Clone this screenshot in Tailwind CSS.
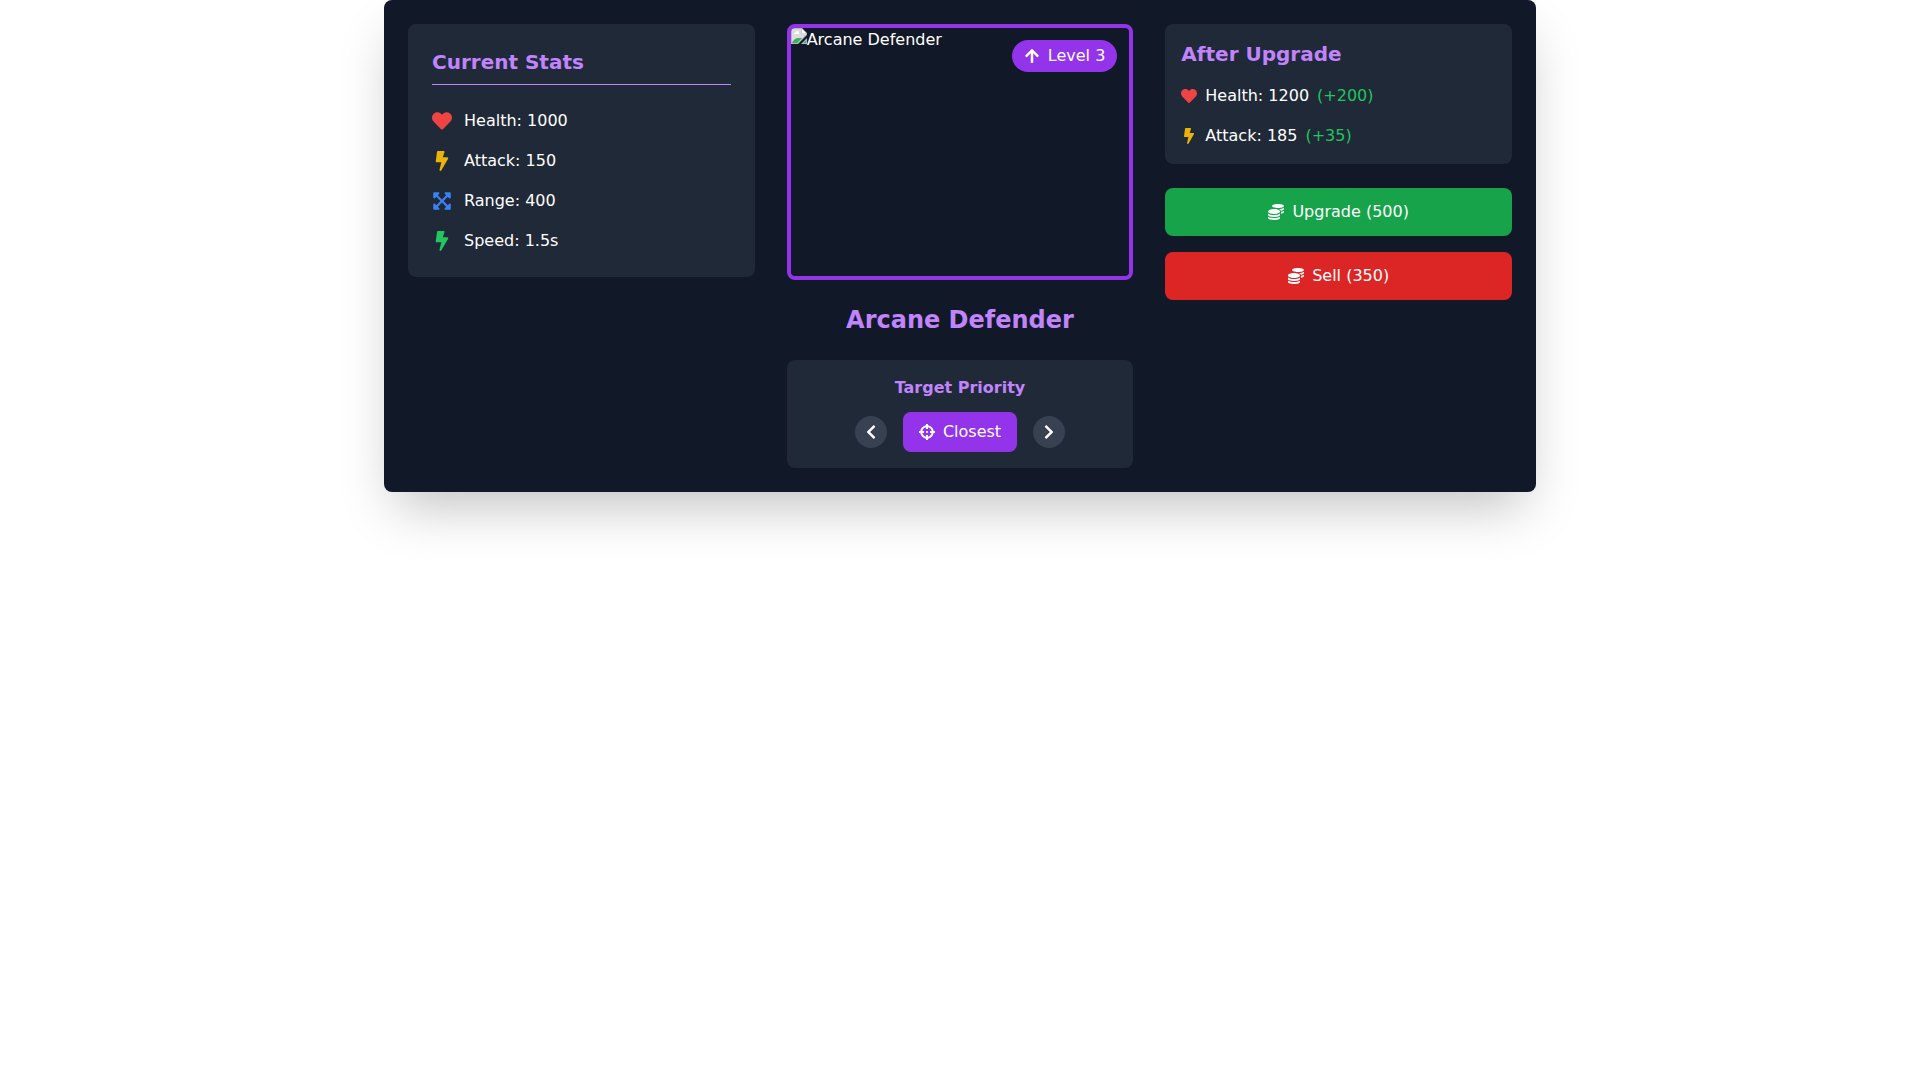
<!DOCTYPE html>
<html lang="en">
<head>
    <meta charset="UTF-8" />
    <meta name="viewport" content="width=device-width, initial-scale=1.0" />
    <title>Arcane Defender</title>
    <script src="https://cdn.jsdelivr.net/npm/@tailwindcss/browser@4"></script>
</head>
<body class="min-h-screen bg-white font-['DejaVu_Sans',sans-serif]">
<!-- Icon sprite -->
<svg class="hidden" aria-hidden="true">
    <symbol id="heart" viewBox="0 0 512 512"><path d="M462.3 62.6C407.5 15.9 326 24.3 275.7 76.2L256 96.5l-19.7-20.3C186.1 24.3 104.5 15.9 49.7 62.6c-62.8 53.6-66.1 149.8-9.9 207.9l193.5 199.8c12.5 12.9 32.8 12.9 45.3 0l193.5-199.8c56.3-58.1 53-154.3-9.8-207.9z"/></symbol>
    <symbol id="bolt" viewBox="0 0 320 512"><path d="M296 160H180.6l42.6-129.8C227.2 15 215.7 0 200 0H56C44 0 33.8 8.9 32.2 20.8l-32 240C-1.7 275.2 9.5 288 24 288h118.7L96.6 482.5c-3.6 15.2 8 29.5 23.3 29.5 8.4 0 16.4-4.4 20.8-12l176-304c9.3-15.9-2.2-36-20.7-36z"/></symbol>
    <symbol id="expand" viewBox="0 0 448 512"><path d="M448 344v112a23.94 23.94 0 0 1-24 24H312c-21.39 0-32.09-25.9-17-41l36.2-36.2L224 295.6 116.77 402.9 153 439c15.09 15.1 4.39 41-17 41H24a23.94 23.94 0 0 1-24-24V344c0-21.4 25.89-32.1 41-17l36.19 36.2L184.46 256 77.18 148.7 41 185c-15.1 15.1-41 4.4-41-17V56a23.94 23.94 0 0 1 24-24h112c21.39 0 32.09 25.9 17 41l-36.2 36.2L224 216.4l107.23-107.3L295 73c-15.09-15.1-4.39-41 17-41h112a23.94 23.94 0 0 1 24 24v112c0 21.4-25.89 32.1-41 17l-36.19-36.2L263.54 256l107.28 107.3L407 327.1c15.1-15.2 41-4.5 41 16.9z"/></symbol>
    <symbol id="arrow-up" viewBox="0 0 448 512"><path d="M34.9 289.5l-22.2-22.2c-9.4-9.4-9.4-24.6 0-33.9L207 39c9.4-9.4 24.6-9.4 33.9 0l194.3 194.3c9.4 9.4 9.4 24.6 0 33.9L413 289.4c-9.5 9.5-25 9.3-34.3-.4L264 168.6V456c0 13.3-10.7 24-24 24h-32c-13.3 0-24-10.7-24-24V168.6L69.2 289.1c-9.3 9.8-24.8 10-34.3.4z"/></symbol>
    <symbol id="chevron-left" viewBox="0 0 320 512"><path d="M34.52 239.03L228.87 44.69c9.37-9.37 24.57-9.37 33.94 0l22.67 22.67c9.36 9.36 9.37 24.52.04 33.9L131.49 256l154.02 154.75c9.34 9.38 9.32 24.54-.04 33.9l-22.67 22.67c-9.37 9.37-24.57 9.37-33.94 0L34.52 272.97c-9.37-9.37-9.37-24.57 0-33.94z"/></symbol>
    <symbol id="chevron-right" viewBox="0 0 320 512"><path d="M285.476 272.971L91.132 467.314c-9.373 9.373-24.569 9.373-33.941 0l-22.667-22.667c-9.357-9.357-9.375-24.522-.04-33.901L188.505 256 34.484 101.255c-9.335-9.379-9.317-24.544.04-33.901l22.667-22.667c9.373-9.373 24.569-9.373 33.941 0L285.475 239.03c9.373 9.372 9.373 24.568.001 33.941z"/></symbol>
    <symbol id="crosshairs" viewBox="0 0 512 512"><path d="M500 224h-30.364C455.724 130.325 381.675 56.276 288 42.364V12c0-6.627-5.373-12-12-12h-40c-6.627 0-12 5.373-12 12v30.364C130.325 56.276 56.276 130.325 42.364 224H12c-6.627 0-12 5.373-12 12v40c0 6.627 5.373 12 12 12h30.364C56.276 381.675 130.325 455.724 224 469.636V500c0 6.627 5.373 12 12 12h40c6.627 0 12-5.373 12-12v-30.364C381.675 455.724 455.724 381.675 469.636 288H500c6.627 0 12-5.373 12-12v-40c0-6.627-5.373-12-12-12zM288 404.634V364c0-6.627-5.373-12-12-12h-40c-6.627 0-12 5.373-12 12v40.634C165.826 392.232 119.783 346.243 107.366 288H148c6.627 0 12-5.373 12-12v-40c0-6.627-5.373-12-12-12h-40.634C119.768 165.826 165.757 119.783 224 107.366V148c0 6.627 5.373 12 12 12h40c6.627 0 12-5.373 12-12v-40.634C346.174 119.768 392.217 165.757 404.634 224H364c-6.627 0-12 5.373-12 12v40c0 6.627 5.373 12 12 12h40.634C392.232 346.174 346.243 392.217 288 404.634zM288 256c0 17.673-14.327 32-32 32s-32-14.327-32-32c0-17.673 14.327-32 32-32s32 14.327 32 32z"/></symbol>
    <symbol id="coins" viewBox="0 0 512 512"><path d="M0 405.3V448c0 35.3 86 64 192 64s192-28.7 192-64v-42.7C342.7 434.4 267.2 448 192 448S41.3 434.4 0 405.3zM320 128c106 0 192-28.7 192-64S426 0 320 0 128 28.7 128 64s86 64 192 64zM0 300.4V352c0 35.3 86 64 192 64s192-28.7 192-64v-51.6c-41.3 34-116.9 51.6-192 51.6S41.3 334.4 0 300.4zm416 11c57.3-11.1 96-31.7 96-55.4v-42.7c-23.2 16.4-57.3 27.6-96 34.5v63.6zM192 160C86 160 0 195.8 0 240s86 80 192 80 192-35.8 192-80-86-80-192-80zm219.3 56.3c60-10.8 100.7-32 100.7-56.3v-42.7c-35.5 25.1-96.5 38.6-160.7 41.8 29.5 14.3 51.2 33.5 60 57.2z"/></symbol>
</svg>
<main class="w-full max-w-6xl mx-auto p-6 rounded-lg bg-[#111827] text-white shadow-2xl">
    <div class="grid grid-cols-1 md:grid-cols-3 gap-8 items-start">
        <!-- Current stats -->
        <section class="bg-[#1f2937] rounded-lg p-6">
            <h2 class="text-xl font-bold text-[#c084fc] border-b border-[#c084fc] pb-2 mb-6">Current Stats</h2>
            <ul class="space-y-4">
                <li class="flex items-center gap-3">
                    <svg class="size-5 fill-[#ef4444]"><use href="#heart"/></svg>
                    <span>Health: 1000</span>
                </li>
                <li class="flex items-center gap-3">
                    <svg class="size-5 fill-[#eab308]"><use href="#bolt"/></svg>
                    <span>Attack: 150</span>
                </li>
                <li class="flex items-center gap-3">
                    <svg class="size-5 fill-[#3b82f6]"><use href="#expand"/></svg>
                    <span>Range: 400</span>
                </li>
                <li class="flex items-center gap-3">
                    <svg class="size-5 fill-[#22c55e]"><use href="#bolt"/></svg>
                    <span>Speed: 1.5s</span>
                </li>
            </ul>
        </section>

        <!-- Tower -->
        <section class="text-center">
            <div class="relative h-64 rounded-lg border-4 border-[#9333ea] overflow-hidden">
                <div class="flex items-start text-left">
                    <svg class="size-4 shrink-0" viewBox="0 0 16 16">
                        <path fill="#b8b8b8" d="M0 0h11l5 5v2L7 16H0z"/>
                        <path fill="#dcdcdc" d="M1 1h9.500v5H15v.6L6.600 15H1z"/>
                        <path fill="#fff" d="M11 1v4.500h4.500zM3 6a1.500 1.500 0 0 1 1.500-1.500 1.800 1.800 0 0 1 3.500 0V6z"/>
                        <path fill="#34b35f" d="M1 15c1-3 3.500-5 6.500-5h3.700l-5 5z"/>
                        <path fill="#b8b8b8" d="M16 10v6h-6z"/>
                        <path fill="#34b35f" d="M15 12.400V15h-2.600z"/>
                    </svg>
                    <span>Arcane Defender</span>
                </div>
                <div class="absolute top-3 right-3 flex items-center gap-2 bg-[#9333ea] rounded-full px-3 py-1">
                    <svg class="size-4 fill-white"><use href="#arrow-up"/></svg>
                    <span>Level 3</span>
                </div>
            </div>
            <h1 class="text-2xl font-bold text-[#c084fc] my-6">Arcane Defender</h1>
            <div class="bg-[#1f2937] rounded-lg p-4">
                <h3 class="font-bold text-[#c084fc] mb-3">Target Priority</h3>
                <div class="flex items-center justify-center gap-4">
                    <button type="button" aria-label="Previous target" class="bg-[#374151] rounded-full p-2">
                        <svg class="size-4 fill-white"><use href="#chevron-left"/></svg>
                    </button>
                    <button type="button" class="flex items-center gap-2 bg-[#9333ea] rounded-lg px-4 py-2">
                        <svg class="size-4 fill-white"><use href="#crosshairs"/></svg>
                        <span>Closest</span>
                    </button>
                    <button type="button" aria-label="Next target" class="bg-[#374151] rounded-full p-2">
                        <svg class="size-4 fill-white"><use href="#chevron-right"/></svg>
                    </button>
                </div>
            </div>
        </section>

        <!-- Upgrade and sell -->
        <section>
            <div class="bg-[#1f2937] rounded-lg p-4 mb-6">
                <h2 class="text-xl font-bold text-[#c084fc] mb-4">After Upgrade</h2>
                <ul class="space-y-4">
                    <li class="flex items-center gap-2">
                        <svg class="size-4 fill-[#ef4444]"><use href="#heart"/></svg>
                        <span>Health: 1200</span>
                        <span class="text-[#22c55e]">(+200)</span>
                    </li>
                    <li class="flex items-center gap-2">
                        <svg class="size-4 fill-[#eab308]"><use href="#bolt"/></svg>
                        <span>Attack: 185</span>
                        <span class="text-[#22c55e]">(+35)</span>
                    </li>
                </ul>
            </div>
            <div class="space-y-4">
                <button type="button" class="w-full flex items-center justify-center gap-2 bg-[#16a34a] rounded-lg py-3">
                    <svg class="size-4 fill-white"><use href="#coins"/></svg>
                    <span>Upgrade (500)</span>
                </button>
                <button type="button" class="w-full flex items-center justify-center gap-2 bg-[#dc2626] rounded-lg py-3">
                    <svg class="size-4 fill-white"><use href="#coins"/></svg>
                    <span>Sell (350)</span>
                </button>
            </div>
        </section>
    </div>
</main>
</body>
</html>
